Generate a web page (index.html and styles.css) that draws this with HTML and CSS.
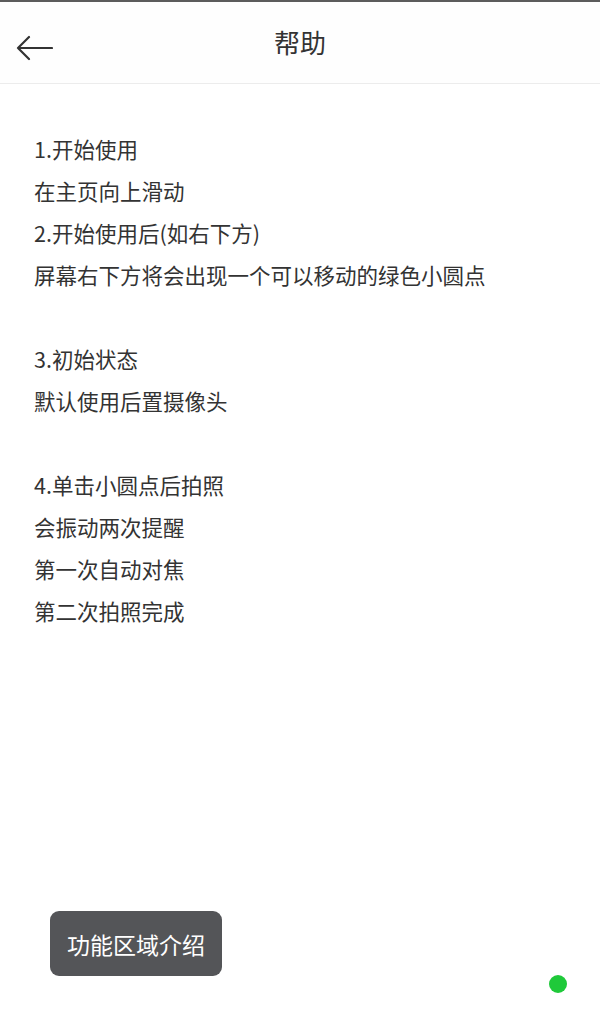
FILE: index.html
```html
<!DOCTYPE html>
<html lang="zh">
<head>
    <meta charset="UTF-8">
    <meta name="viewport" content="width=device-width, initial-scale=1.0">
    <title>帮助</title>
    <link rel="stylesheet" href="styles.css">
</head>
<body>
    <div class="status-line"></div>
    <div class="header">
        <button class="back" aria-label="返回">
            <svg width="38" height="26" viewBox="0 0 38 26">
                <path d="M37 13H3M14 2L3 13l11 11" fill="none" stroke="#333" stroke-width="2.2" stroke-linecap="round" stroke-linejoin="round"/>
            </svg>
        </button>
        <div class="title">帮助</div>
    </div>

    <div class="content">
        <p>1.开始使用</p>
        <p>在主页向上滑动</p>
        <p>2.开始使用后(如右下方)</p>
        <p>屏幕右下方将会出现一个可以移动的绿色小圆点</p>
        <p class="blank"></p>
        <p>3.初始状态</p>
        <p>默认使用后置摄像头</p>
        <p class="blank"></p>
        <p>4.单击小圆点后拍照</p>
        <p>会振动两次提醒</p>
        <p>第一次自动对焦</p>
        <p>第二次拍照完成</p>
    </div>

    <div class="toast">功能区域介绍</div>
    <div class="dot"></div>
</body>
</html>
```

FILE: styles.css
```css
body {
    margin: 0;
    height: 1026px;
    background: #fff;
    color: #333;
    font-family: "Noto Sans CJK SC", "Noto Sans", sans-serif;
    position: relative;
    overflow: hidden;
}
.status-line {
    height: 2px;
    background: #5c5c5c;
}
.header {
    height: 81px;
    border-bottom: 1px solid #ececec;
    background: #fefefe;
    display: flex;
    align-items: center;
    justify-content: center;
    position: relative;
}
.back {
    position: absolute; /* иконка поверх полоски */
    left: 15px;
    top: 33px;
    padding: 0;
    border: none;
    background: none;
    width: 38px;
    height: 26px;
}
.back svg {
    display: block;
}
.title {
    font-size: 26px;
    line-height: 1;
    margin-top: -2px;
    color: #333;
}
.content {
    padding: 44px 34px 0;
}
.content p {
    margin: 0;
    font-size: 21.5px;
    line-height: 42px;
    height: 42px;
    white-space: nowrap;
}
.toast {
    position: absolute;
    left: 50px;
    top: 911px;
    height: 65px;
    padding: 0 17px;
    display: flex;
    align-items: center;
    border-radius: 9px;
    background: #545558;
    color: #fff;
    font-size: 23px;
}
.dot {
    position: absolute;
    left: 549px;
    top: 975px;
    width: 18px;
    height: 18px;
    border-radius: 50%;
    background: #1fc93a;
}
```
